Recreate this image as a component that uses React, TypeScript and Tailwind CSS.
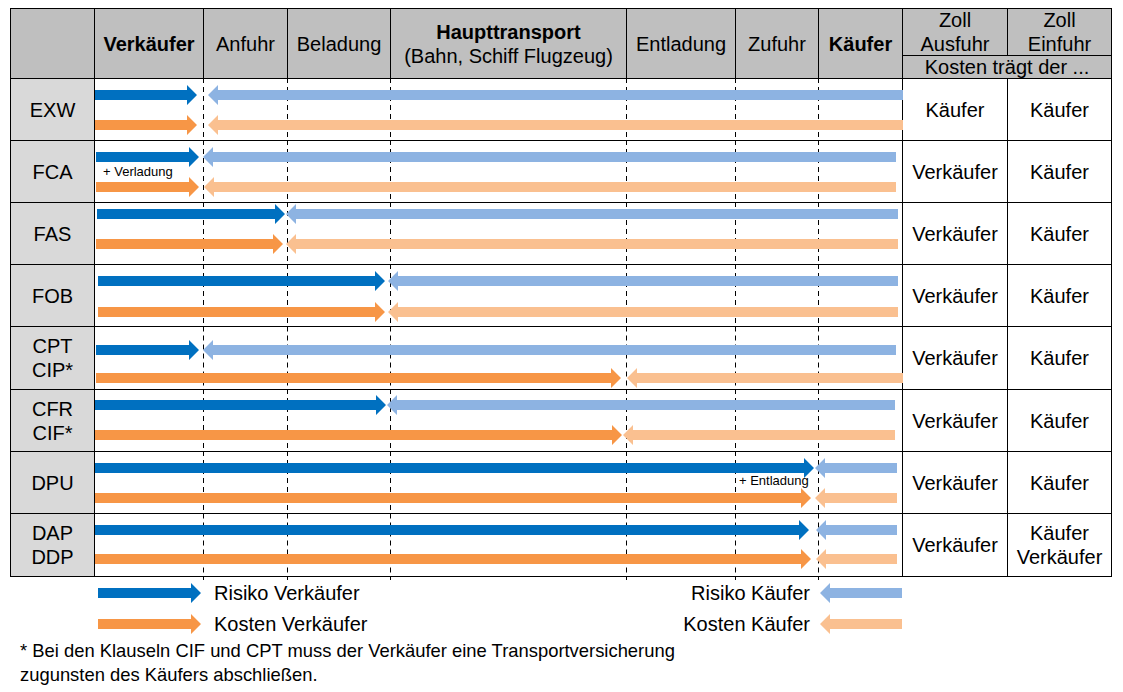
import React from "react";

const COLS = "grid-cols-[84px_109px_84px_103px_236px_109px_83px_84px_105px_104px]";

const BLUE = "#0070c0";
const LBLUE = "#8db3e2";
const ORANGE = "#f79646";
const LORANGE = "#fac090";

function rightArrow(x0: number, tip: number, y: number) {
  const b = tip - 10;
  return `${x0},${y - 5} ${b},${y - 5} ${b},${y - 10} ${tip},${y} ${b},${y + 10} ${b},${y + 5} ${x0},${y + 5}`;
}
function leftArrow(tip: number, x1: number, y: number) {
  const b = tip + 10;
  return `${x1},${y - 5} ${b},${y - 5} ${b},${y - 10} ${tip},${y} ${b},${y + 10} ${b},${y + 5} ${x1},${y + 5}`;
}

type Row = {
  label: string[];
  ausfuhr: string[];
  einfuhr: string[];
  h: number;
  y1: number;
  y2: number;
  blue: [number, number];
  lblue: [number, number];
  orange: [number, number];
  lorange: [number, number];
  note?: { text: string; x: number; y: number };
};

const rows: Row[] = [
  { label: ["EXW"], ausfuhr: ["Käufer"], einfuhr: ["Käufer"], h: 62, y1: 16, y2: 46, blue: [0, 102], lblue: [113, 808], orange: [0, 102], lorange: [113, 808] },
  { label: ["FCA"], ausfuhr: ["Verkäufer"], einfuhr: ["Käufer"], h: 62, y1: 16, y2: 46, blue: [1, 104], lblue: [108, 801], orange: [1, 104], lorange: [109, 801], note: { text: "+ Verladung", x: 8, y: 23 } },
  { label: ["FAS"], ausfuhr: ["Verkäufer"], einfuhr: ["Käufer"], h: 62, y1: 11, y2: 41, blue: [2, 190], lblue: [191, 803], orange: [1, 188], lorange: [191, 803] },
  { label: ["FOB"], ausfuhr: ["Verkäufer"], einfuhr: ["Käufer"], h: 62, y1: 16, y2: 47, blue: [3, 290], lblue: [293, 803], orange: [3, 290], lorange: [293, 803] },
  { label: ["CPT", "CIP*"], ausfuhr: ["Verkäufer"], einfuhr: ["Käufer"], h: 63, y1: 23, y2: 51, blue: [1, 104], lblue: [108, 801], orange: [1, 526], lorange: [532, 808] },
  { label: ["CFR", "CIF*"], ausfuhr: ["Verkäufer"], einfuhr: ["Käufer"], h: 62, y1: 15, y2: 45, blue: [0, 291], lblue: [292, 800], orange: [0, 527], lorange: [528, 800] },
  { label: ["DPU"], ausfuhr: ["Verkäufer"], einfuhr: ["Käufer"], h: 62, y1: 16, y2: 46, blue: [0, 719], lblue: [720, 802], orange: [0, 716], lorange: [720, 802], note: { text: "+ Entladung", x: 644, y: 21 } },
  { label: ["DAP", "DDP"], ausfuhr: ["Verkäufer"], einfuhr: ["Käufer", "Verkäufer"], h: 63, y1: 16, y2: 45, blue: [0, 714], lblue: [721, 802], orange: [0, 716], lorange: [721, 802] },
];

const DASH =
  "bg-[linear-gradient(to_bottom,#000_55%,transparent_55%)] bg-[length:1px_9px] bg-repeat-y bg-right";

function Lines({ lines }: { lines: string[] }) {
  return (
    <div className="flex flex-col items-center">
      {lines.map((l) => (
        <span key={l}>{l}</span>
      ))}
    </div>
  );
}

function BodyRow({ r }: { r: Row }) {
  const dashed = `border-b border-black ${DASH}`;
  return (
    <div className={`relative grid ${COLS}`} style={{ height: r.h }}>
      <div className="flex items-center justify-center bg-[#d9d9d9] border-r border-b border-black">
        <Lines lines={r.label} />
      </div>
      <div className={dashed} />
      <div className={dashed} />
      <div className={dashed} />
      <div className={dashed} />
      <div className={dashed} />
      <div className={dashed} />
      <div className="border-r border-b border-black" />
      <div className="flex items-center justify-center border-r border-b border-black">
        <Lines lines={r.ausfuhr} />
      </div>
      <div className="flex items-center justify-center border-r border-b border-black">
        <Lines lines={r.einfuhr} />
      </div>
      <div className="absolute left-[84px] top-0 w-[808px] h-full">
        <svg width="808" height={r.h} className="block">
          <polygon points={rightArrow(r.blue[0], r.blue[1], r.y1)} fill={BLUE} />
          <polygon points={leftArrow(r.lblue[0], r.lblue[1], r.y1)} fill={LBLUE} />
          <polygon points={rightArrow(r.orange[0], r.orange[1], r.y2)} fill={ORANGE} />
          <polygon points={leftArrow(r.lorange[0], r.lorange[1], r.y2)} fill={LORANGE} />
        </svg>
        {r.note && (
          <span
            className="absolute text-[13px] leading-[16px] whitespace-nowrap"
            style={{ left: r.note.x, top: r.note.y }}
          >
            {r.note.text}
          </span>
        )}
      </div>
    </div>
  );
}

function LegendArrow({ dir, color, w }: { dir: "r" | "l"; color: string; w: number }) {
  return (
    <svg width={w} height="20" className="block shrink-0">
      <polygon points={dir === "r" ? rightArrow(0, w, 10) : leftArrow(0, w, 10)} fill={color} />
    </svg>
  );
}

export default function App() {
  const hcell = "flex items-center justify-center border-r border-b border-black bg-[#bfbfbf] row-span-2 text-center";
  return (
    <div className="w-[1123px] h-[692px] bg-white text-black font-['Liberation_Sans',Arial,sans-serif] text-[20px] leading-[24px] overflow-hidden">
      <div className="pt-[8px] pl-[10px]">
        <div className="w-[1102px] border-l border-t border-black">
          <div className={`grid ${COLS} grid-rows-[47px_23px]`}>
            <div className={hcell} />
            <div className={`${hcell} font-bold`}>Verkäufer</div>
            <div className={hcell}>Anfuhr</div>
            <div className={hcell}>Beladung</div>
            <div className={`${hcell} flex-col`}>
              <span className="font-bold">Haupttransport</span>
              <span>(Bahn, Schiff Flugzeug)</span>
            </div>
            <div className={hcell}>Entladung</div>
            <div className={hcell}>Zufuhr</div>
            <div className={`${hcell} font-bold`}>Käufer</div>
            <div className="flex flex-col items-center justify-center border-r border-b border-black bg-[#bfbfbf]">
              <span>Zoll</span>
              <span>Ausfuhr</span>
            </div>
            <div className="flex flex-col items-center justify-center border-r border-b border-black bg-[#bfbfbf]">
              <span>Zoll</span>
              <span>Einfuhr</span>
            </div>
            <div className="col-span-2 flex items-center justify-center border-r border-b border-black bg-[#bfbfbf] leading-[20px]">
              Kosten trägt der ...
            </div>
          </div>
          {rows.map((r) => (
            <BodyRow key={r.label.join("")} r={r} />
          ))}
        </div>
        <div className={`grid ${COLS} h-[5px] ml-[1px]`}>
          <div />
          <div className={DASH} />
          <div className={DASH} />
          <div className={DASH} />
          <div className={DASH} />
          <div className={DASH} />
          <div className={DASH} />
        </div>
      </div>
      <div className="ml-[98px] mt-[1px] w-[804px] flex flex-col gap-[11px]">
        <div className="flex items-center justify-between h-[20px]">
          <div className="flex items-center gap-[13px]">
            <LegendArrow dir="r" color={BLUE} w={103} />
            <span>Risiko Verkäufer</span>
          </div>
          <div className="flex items-center gap-[10px]">
            <span>Risiko Käufer</span>
            <LegendArrow dir="l" color={LBLUE} w={82} />
          </div>
        </div>
        <div className="flex items-center justify-between h-[20px]">
          <div className="flex items-center gap-[13px]">
            <LegendArrow dir="r" color={ORANGE} w={103} />
            <span>Kosten Verkäufer</span>
          </div>
          <div className="flex items-center gap-[10px]">
            <span>Kosten Käufer</span>
            <LegendArrow dir="l" color={LORANGE} w={82} />
          </div>
        </div>
      </div>
      <div className="ml-[20px] mt-[5px] text-[18.4px] leading-[24px]">
        <div>* Bei den Klauseln CIF und CPT muss der Verkäufer eine Transportversicherung</div>
        <div>zugunsten des Käufers abschließen.</div>
      </div>
    </div>
  );
}
